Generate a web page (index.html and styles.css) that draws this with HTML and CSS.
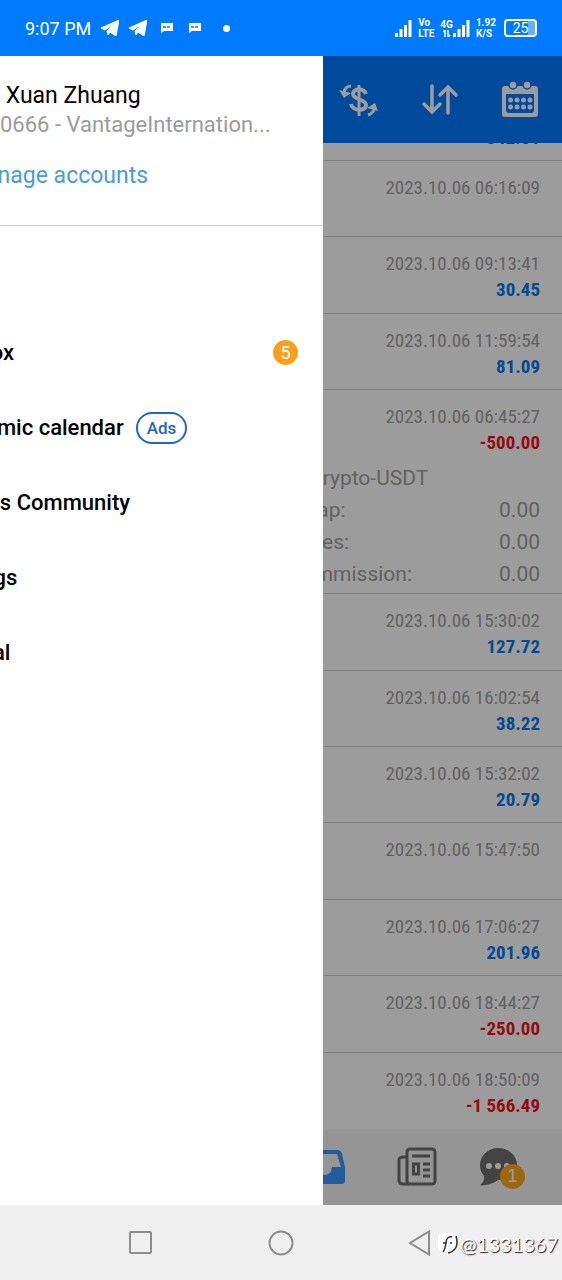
FILE: index.html
```html
<!DOCTYPE html>
<html lang="en">
  <head>
    <meta charset="UTF-8" />
    <meta name="viewport" content="width=device-width, initial-scale=1.0" />
    <title>History</title>
    <link rel="stylesheet" href="styles.css">
  </head>
  <body>
    <!-- Status bar -->
    <header class="status-bar">
      <div class="status-left">
        <span class="clock">9:07 PM</span>
        <svg width="18" height="16" viewBox="0 0 18 16"><path d="M0 8 18 0 15 16 9 12 7 15 6 11 13 4 4 10Z" fill="#fff" stroke="#fff"/></svg>
        <svg width="18" height="16" viewBox="0 0 18 16"><path d="M0 8 18 0 15 16 9 12 7 15 6 11 13 4 4 10Z" fill="#fff" stroke="#fff"/></svg>
        <svg class="note" width="12" height="10" viewBox="0 0 12 10"><path d="M0 0H12V8H3L0 10Z" fill="#fff"/><path d="M2 4H10" stroke="#007aff" stroke-width="1.5" stroke-dasharray="3 1"/></svg>
        <svg class="note" width="12" height="10" viewBox="0 0 12 10"><path d="M0 0H12V8H3L0 10Z" fill="#fff"/><path d="M2 4H10" stroke="#007aff" stroke-width="1.5" stroke-dasharray="3 1"/></svg>
        <span class="dot"></span>
      </div>
      <div class="status-right">
        <svg width="17" height="17" viewBox="0 0 17 17"><path d="M1.5 13v4M6 9v8M10.5 5v12M15 0v17" stroke="#fff" stroke-width="3"/></svg>
        <span class="stack">Vo<br />LTE</span>
        <span class="network">
          <span class="net-label">4G
            <svg width="8" height="7" viewBox="0 0 8 7"><path d="M0 2 2 0V7M5 0V7L7 5" fill="none" stroke="#fff" stroke-width="1.5"/></svg>
          </span>
          <svg width="17" height="17" viewBox="0 0 17 17"><path d="M1.5 13v4M6 9v8M10.5 5v12M15 0v17" stroke="#fff" stroke-width="3"/></svg>
        </span>
        <span class="stack">1.92<br />K/S</span>
        <span class="battery">25</span>
      </div>
    </header>

    <main class="screen">
      <!-- History -->
      <section class="app">
        <div class="toolbar">
          <button aria-label="Symbols">
            <svg width="40" height="38" viewBox="0 0 40 38" fill="none" stroke="#fff" stroke-width="4">
              <path d="M28 13C26 7 15 7 15 13c0 6 13 5 13 11 0 7-14 6-15-1"/><path d="M21 4V35" stroke-width="3"/>
              <path d="M13 5C9 5 7 7 6 11M30 34c4-1 6-4 7-8" stroke-width="3"/>
              <path d="M1 9 6 17 13 12ZM29 27 37 22 40 30Z" fill="#fff" stroke="none"/>
            </svg>
          </button>
          <button aria-label="Sort">
            <svg width="40" height="38" viewBox="0 0 40 38" fill="none" stroke="#fff" stroke-width="3.5" stroke-linecap="round">
              <path d="M13 5V31M5 23l8 8 8-8M29 32V6M21 14l8-8 8 8"/>
            </svg>
          </button>
          <button aria-label="Period">
            <svg width="40" height="38" viewBox="0 0 40 38">
              <path d="M5 5H35Q38 5 38 8V33Q38 36 35 36H5Q2 36 2 33V8Q2 5 5 5ZM6 13V29Q6 32 9 32H31Q34 32 34 29V13Z" fill="#fff" fill-rule="evenodd"/>
              <g fill="#fff" stroke="#007aff" stroke-width="1.5"><circle cx="13" cy="4" r="4"/><circle cx="27" cy="4" r="4"/></g>
              <g fill="#fff"><circle cx="10.500" cy="19" r="2.500"/><circle cx="17" cy="19" r="2.500"/><circle cx="23.500" cy="19" r="2.500"/><circle cx="30" cy="19" r="2.500"/><circle cx="10.500" cy="26" r="2.500"/><circle cx="17" cy="26" r="2.500"/><circle cx="23.500" cy="26" r="2.500"/><circle cx="30" cy="26" r="2.500"/></g>
            </svg>
          </button>
        </div>

        <ul class="deals">
          <li class="deal cut"><b class="loss">-342.61</b></li>
          <li class="deal"><time>2023.10.06 06:16:09</time></li>
          <li class="deal"><time>2023.10.06 09:13:41</time><b>30.45</b></li>
          <li class="deal"><time>2023.10.06 11:59:54</time><b>81.09</b></li>
          <li class="deal open">
            <time>2023.10.06 06:45:27</time><b class="loss">-500.00</b>
            <div class="details">
              <p class="comment">Crypto-USDT</p>
              <p><span>Swap:</span><span>0.00</span></p>
              <p><span>Taxes:</span><span>0.00</span></p>
              <p><span>Commission:</span><span>0.00</span></p>
            </div>
          </li>
          <li class="deal"><time>2023.10.06 15:30:02</time><b>127.72</b></li>
          <li class="deal"><time>2023.10.06 16:02:54</time><b>38.22</b></li>
          <li class="deal"><time>2023.10.06 15:32:02</time><b>20.79</b></li>
          <li class="deal"><time>2023.10.06 15:47:50</time></li>
          <li class="deal"><time>2023.10.06 17:06:27</time><b>201.96</b></li>
          <li class="deal"><time>2023.10.06 18:44:27</time><b class="loss">-250.00</b></li>
          <li class="deal"><time>2023.10.06 18:50:09</time><b class="loss">-1 566.49</b></li>
        </ul>

        <nav class="tabs">
          <button aria-label="History">
            <svg width="40" height="40" viewBox="0 0 40 40"><path d="M8 3H32Q36 3 37 7L40 20V34Q40 37 37 37H3Q0 37 0 34V20L3 7Q4 3 8 3ZM8 7 5 20H12Q14 28 20 28T27 20H36L32 7Z" fill="#3c96ff" fill-rule="evenodd"/></svg>
          </button>
          <button aria-label="News">
            <svg width="40" height="40" viewBox="0 0 40 40" fill="none" stroke="#6e6e6e" stroke-width="3"><rect x="10" y="2" width="28" height="35" rx="3"/><path d="M10 10H7Q2 10 2 13V33Q2 37 6 37H12M15 9H33M26 17H33M26 23H33M26 29H33"/><rect x="16.500" y="17" width="5" height="10"/></svg>
          </button>
          <button aria-label="Messages">
            <svg width="40" height="40" viewBox="0 0 40 40"><path d="M19 1C30 1 38 9 38 18S30 33 19 33C15 36 8 39 1 38Q6 34 5 29C-5 17 5 1 19 1Z" fill="#6e6e6e"/><g fill="#fff"><circle cx="10" cy="19" r="3"/><circle cx="19" cy="19" r="3"/><circle cx="28" cy="19" r="3"/></g></svg>
            <span class="badge tab-badge">1</span>
          </button>
        </nav>
      </section>

      <div class="scrim"></div>

      <!-- Side menu -->
      <aside class="drawer">
        <div class="account">
          <h1>&nbsp;Xuan Zhuang</h1>
          <p>0666 - VantageInternation...</p>
          <a href="#">Manage accounts</a>
        </div>
        <nav class="menu">
          <a href="#">Mailbox <span class="badge">5</span></a>
          <a href="#">Economic calendar <span class="ads">Ads</span></a>
          <a href="#">Traders Community</a>
          <a href="#">Settings</a>
          <a href="#">Journal</a>
        </nav>
      </aside>
    </main>

    <!-- System navigation -->
    <footer class="system-nav">
      <button aria-label="Recent apps"><svg width="28" height="28" viewBox="0 0 28 28"><rect x="3" y="3" width="21" height="21" rx="1"/></svg></button>
      <button aria-label="Home"><svg width="28" height="28" viewBox="0 0 28 28"><circle cx="14" cy="14" r="11.500"/></svg></button>
      <button aria-label="Back"><svg width="28" height="28" viewBox="0 0 28 28"><path d="M22 2.500V25.500L3 14Z"/></svg></button>
      <div class="watermark">
        <svg width="20" height="24" viewBox="0 0 20 24"><path d="M5 1H13Q20 2 19 13 18 19 12 20L9 23V20H5Q0 20 0 15V6Q0 1 5 1Z" fill="#fff"/><path d="M18 4Q22 18 10 21M5 20Q7 18 8 10 9 4 14 5M5 11H9M12 11H14" fill="none" stroke="#333" stroke-width="1.500"/></svg>
        <span>@1331367</span>
      </div>
    </footer>
  </body>
</html>
```
FILE: styles.css
```css
* {
  box-sizing: border-box;
  margin: 0;
  padding: 0;
}

body {
  display: flex;
  flex-direction: column;
  min-height: 100vh;
  font-family: Roboto, "Liberation Sans", sans-serif;
  background: #efefef;
  overflow-x: hidden;
}

button {
  display: flex;
  align-items: center;
  justify-content: center;
  background: none;
  border: none;
  cursor: pointer;
}

a {
  text-decoration: none;
}

svg {
  flex: none;
}

/* Status bar */
.status-bar {
  display: flex;
  justify-content: space-between;
  align-items: center;
  height: 56px;
  padding: 0 25px;
  background: #007aff;
  color: #fff;
}

.status-left,
.status-right,
.network {
  display: flex;
  align-items: center;
}

.status-left {
  gap: 10px;
}

.clock {
  font-size: 18px;
}

.note {
  margin: 0 2px 0 4px;
}

.dot {
  width: 7px;
  height: 7px;
  margin-left: 10px;
  border-radius: 50%;
  background: #fff;
}

.status-right {
  gap: 6px;
}

.stack,
.net-label {
  font-size: 10px;
  font-weight: 700;
  line-height: 11px;
}

.net-label {
  display: flex;
  flex-direction: column;
  align-items: center;
}

.battery {
  width: 33px;
  margin-left: 2px;
  border: 2px solid #fff;
  border-radius: 4px;
  background: linear-gradient(90deg, transparent 75%, #66afff 75%);
  font-size: 14px;
  line-height: 14px;
  text-align: center;
}

/* Main area */
.screen {
  position: relative;
  display: flex;
  flex: 1;
  overflow: hidden;
}

.app {
  display: flex;
  flex-direction: column;
  flex: 1;
  background: #fff;
}

.toolbar {
  display: flex;
  justify-content: flex-end;
  gap: 41px;
  height: 87px;
  padding: 0 22px;
  background: #007aff;
}

.deals {
  display: flex;
  flex-direction: column;
  flex: 1;
  list-style: none;
}

.deal {
  display: flex;
  flex-direction: column;
  flex: 1 0 76px;
  align-items: flex-end;
  padding: 14px 22px 0;
  border-bottom: 1px solid #d2d2d2;
  font-family: "Roboto Condensed", "Liberation Sans Narrow", Roboto, sans-serif;
  font-size: 19px;
  line-height: 26px;
}

.deal:last-child {
  border-bottom: none;
}

.deal time {
  color: #a0a0a0;
}

.deal b {
  color: #0878f0;
}

.deal .loss {
  color: #f01420;
}

.deal.cut {
  flex: 0 0 18px;
  justify-content: flex-end;
  padding-top: 0;
  padding-bottom: 9px;
  overflow: hidden;
}

.deal.open {
  flex: 0 0 204px;
}

.details {
  width: 100%;
  padding: 6px 0 0 267px;
  color: #a0a0a0;
  font-family: Roboto, sans-serif;
  font-size: 21px;
  line-height: 32px;
}

.details p {
  display: flex;
  justify-content: space-between;
}

.details .comment {
  padding-left: 20px;
}

/* Bottom tabs */
.tabs {
  display: flex;
  justify-content: flex-end;
  gap: 42px;
  height: 76px;
  padding: 0 43px;
  background: #f3f3f3;
}

.tabs button {
  position: relative;
}

.tabs button:first-child {
  margin-right: 10px;
}

.badge {
  width: 25px;
  height: 25px;
  border-radius: 50%;
  background: #f9a01b;
  color: #fff;
  font-size: 18px;
  font-weight: 400;
  line-height: 25px;
  text-align: center;
}

.tab-badge {
  position: absolute;
  right: -6px;
  bottom: 16px;
  background: #ffa91e;
}

.scrim {
  position: absolute;
  inset: 0;
  background: rgba(0, 0, 0, 0.39);
}

/* Side menu */
.drawer {
  position: absolute;
  top: 0;
  bottom: 0;
  left: 0;
  width: 57.5%;
  background: #fff;
  overflow: hidden;
}

.account {
  height: 170px;
  padding-top: 26px;
  border-bottom: 1px solid #d0d0d0;
  white-space: nowrap;
}

.account h1 {
  font-size: 23px;
  font-weight: 400;
  line-height: 28px;
}

.account p {
  color: #9b9b9b;
  font-size: 22px;
  line-height: 30px;
}

.account a {
  display: block;
  margin: 22px 0 0 -35px;
  color: #4b9be0;
  font-size: 23px;
  line-height: 28px;
}

.menu {
  display: flex;
  flex-direction: column;
  padding: 89px 25px 0 0;
  margin-left: -64px;
}

.menu a {
  display: flex;
  align-items: center;
  gap: 12px;
  height: 75px;
  color: #000;
  font-size: 22px;
  font-weight: 500;
}

.menu .badge {
  margin-left: auto;
}

.ads {
  padding: 0 9px;
  border: 2px solid #1f66d0;
  border-radius: 16px;
  color: #1f66d0;
  font-size: 17px;
  line-height: 28px;
}

/* System navigation */
.system-nav {
  position: relative;
  display: flex;
  justify-content: center;
  gap: 112px;
  height: 75px;
  background: #efefef;
}

.system-nav button svg {
  fill: none;
  stroke: #8c8c8c;
  stroke-width: 2;
}

.watermark {
  position: absolute;
  right: 4px;
  bottom: 24px;
  display: flex;
  align-items: center;
  gap: 2px;
  color: #fff;
  font-family: Lato, sans-serif;
  font-size: 20px;
  line-height: 24px;
  text-shadow: 1px 1px 1px #222;
}
```
